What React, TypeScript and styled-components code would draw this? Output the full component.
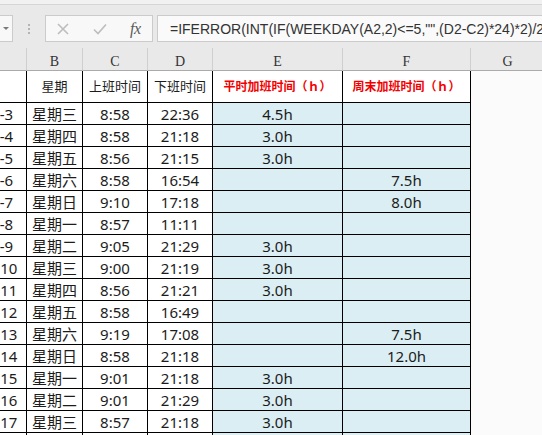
import React from "react";
import styled, { createGlobalStyle } from "styled-components";

const Global = createGlobalStyle`
  html, body { margin: 0; padding: 0; background: #ffffff; }
  body { font-family: "Noto Sans", "Noto Sans CJK SC", sans-serif; }
`;

const Page = styled.div`
  width: 542px;
  height: 435px;
  overflow: hidden;
  display: flex;
  flex-direction: column;
  background: #ffffff;
`;

const TopBar = styled.div`
  height: 48px;
  flex: none;
  background: #e9e9e9;
  display: flex;
  flex-direction: column;
`;

const TopStrip = styled.div`
  height: 4px;
  background: #f1f1f1;
  border-bottom: 1px solid #d6d6d6;
`;

const FormulaRow = styled.div`
  margin-top: 10px;
  height: 27px;
  display: flex;
  align-items: stretch;
`;

const NameBox = styled.div`
  width: 13px;
  box-sizing: border-box;
  background: #f8f8f8;
  border: 1px solid #cbcbcb;
  border-left: none;
  display: flex;
  align-items: center;
  padding-left: 3px;
`;

const DropArrow = styled.div`
  width: 0;
  height: 0;
  border-left: 3px solid transparent;
  border-right: 3px solid transparent;
  border-top: 3px solid #7a7a7a;
`;

const Grip = styled.div`
  width: 32px;
  display: flex;
  justify-content: center;
  align-items: center;
`;

const GripDots = styled.div`
  display: flex;
  flex-direction: column;
  gap: 2px;
  margin-left: -1px;
  span {
    width: 2px;
    height: 2px;
    background: #b4b4b4;
  }
`;

const ButtonBox = styled.div`
  width: 108px;
  box-sizing: border-box;
  background: #f8f8f8;
  border: 1px solid #cbcbcb;
  display: flex;
  align-items: center;
  padding-left: 11px;
  gap: 24px;
`;

const IconSlot = styled.div<{ $w: number }>`
  width: ${(p) => p.$w}px;
  height: 14px;
  display: flex;
  align-items: center;
  justify-content: center;
`;

const Fx = styled.span`
  font-family: "Liberation Serif", serif;
  font-style: italic;
  font-size: 16px;
  color: #5a5a5a;
  margin-left: -1px;
  letter-spacing: -0.5px;
`;

const FormulaBox = styled.div`
  flex: 1;
  margin-left: 4px;
  box-sizing: border-box;
  background: #fafafa;
  border: 1px solid #cbcbcb;
  border-right: none;
  display: flex;
  align-items: center;
  padding-left: 12px;
  overflow: hidden;
  white-space: nowrap;
  font-family: "Liberation Sans", "Noto Sans CJK SC", sans-serif;
  font-size: 14px;
  color: #333333;
`;

const Viewport = styled.div`
  flex: 1;
  overflow: hidden;
`;

const Sheet = styled.div`
  margin-left: -61px;
  display: grid;
  grid-template-columns: 88px 56px 65px 65px 130px 128px 73px;
  grid-template-rows: 23px 32px repeat(16, 22px);
`;

const ColHead = styled.div<{ $last?: boolean }>`
  background: #e9e9e9;
  border-bottom: 1px solid #ababab;
  border-right: ${(p) => (p.$last ? "none" : "1px solid #cfcfcf")};
  display: flex;
  align-items: center;
  justify-content: center;
  font-family: "Liberation Serif", "DejaVu Serif", serif;
  font-size: 14px;
  color: #333333;
  padding-top: 5px;
  box-sizing: border-box;
`;

const Cell = styled.div<{ $tone?: "plain" | "blue" | "empty"; $head?: boolean; $red?: boolean }>`
  box-sizing: border-box;
  background: ${(p) => (p.$tone === "blue" ? "#daeef3" : p.$tone === "empty" ? "#fbfbfb" : "#ffffff")};
  border-right: ${(p) => (p.$tone === "empty" ? "none" : "1px solid #000000")};
  border-bottom: ${(p) => (p.$tone === "empty" ? "none" : "1px solid #000000")};
  display: flex;
  align-items: center;
  justify-content: center;
  white-space: nowrap;
  overflow: hidden;
  font-size: ${(p) => (p.$red ? "12px" : p.$head ? "13px" : "15px")};
  font-weight: ${(p) => (p.$red ? 700 : 400)};
  color: ${(p) => (p.$red ? "#f20000" : "#1c1c1c")};
  padding-bottom: ${(p) => (p.$head ? "2px" : "0")};
`;

const letters = ["A", "B", "C", "D", "E", "F", "G"];

type Row = [string, string, string, string, string, string];

const rows: Row[] = [
  ["2019-1-3", "星期三", "8:58", "22:36", "4.5h", ""],
  ["2019-1-4", "星期四", "8:58", "21:18", "3.0h", ""],
  ["2019-1-5", "星期五", "8:56", "21:15", "3.0h", ""],
  ["2019-1-6", "星期六", "8:58", "16:54", "", "7.5h"],
  ["2019-1-7", "星期日", "9:10", "17:18", "", "8.0h"],
  ["2019-1-8", "星期一", "8:57", "11:11", "", ""],
  ["2019-1-9", "星期二", "9:05", "21:29", "3.0h", ""],
  ["2019-1-10", "星期三", "9:00", "21:19", "3.0h", ""],
  ["2019-1-11", "星期四", "8:56", "21:21", "3.0h", ""],
  ["2019-1-12", "星期五", "8:58", "16:49", "", ""],
  ["2019-1-13", "星期六", "9:19", "17:08", "", "7.5h"],
  ["2019-1-14", "星期日", "8:58", "21:18", "", "12.0h"],
  ["2019-1-15", "星期一", "9:01", "21:18", "3.0h", ""],
  ["2019-1-16", "星期二", "9:01", "21:29", "3.0h", ""],
  ["2019-1-17", "星期三", "8:57", "21:18", "3.0h", ""],
  ["2019-1-18", "星期四", "8:59", "21:18", "3.0h", ""],
];

const CrossIcon = () => (
  <svg width="12" height="12" viewBox="0 0 12 12">
    <path d="M1 1 L11 11 M11 1 L1 11" stroke="#bdbdbd" strokeWidth="1.6" fill="none" />
  </svg>
);

const CheckIcon = () => (
  <svg width="14" height="12" viewBox="0 0 14 12">
    <path d="M1 6.5 L5 10.5 L13 1.5" stroke="#bdbdbd" strokeWidth="1.6" fill="none" />
  </svg>
);

export default function App() {
  return (
    <>
      <Global />
      <Page>
        <TopBar>
          <TopStrip />
          <FormulaRow>
            <NameBox>
              <DropArrow />
            </NameBox>
            <Grip>
              <GripDots>
                <span />
                <span />
                <span />
              </GripDots>
            </Grip>
            <ButtonBox>
              <IconSlot $w={12}>
                <CrossIcon />
              </IconSlot>
              <IconSlot $w={14}>
                <CheckIcon />
              </IconSlot>
              <Fx>fx</Fx>
            </ButtonBox>
            <FormulaBox>=IFERROR(INT(IF(WEEKDAY(A2,2)&lt;=5,"",(D2-C2)*24)*2)/2,"")&amp;"h"</FormulaBox>
          </FormulaRow>
        </TopBar>
        <Viewport>
          <Sheet>
            {letters.map((l, i) => (
              <ColHead key={l} $last={i === letters.length - 1}>
                {l}
              </ColHead>
            ))}
            <Cell $head />
            <Cell $head>星期</Cell>
            <Cell $head>上班时间</Cell>
            <Cell $head>下班时间</Cell>
            <Cell $head $red>平时加班时间（ｈ）</Cell>
            <Cell $head $red>周末加班时间（ｈ）</Cell>
            <Cell $tone="empty" />
            {rows.map((r, i) => (
              <React.Fragment key={i}>
                <Cell>{r[0]}</Cell>
                <Cell>{r[1]}</Cell>
                <Cell>{r[2]}</Cell>
                <Cell>{r[3]}</Cell>
                <Cell $tone="blue">{r[4]}</Cell>
                <Cell $tone="blue">{r[5]}</Cell>
                <Cell $tone="empty" />
              </React.Fragment>
            ))}
          </Sheet>
        </Viewport>
      </Page>
    </>
  );
}
